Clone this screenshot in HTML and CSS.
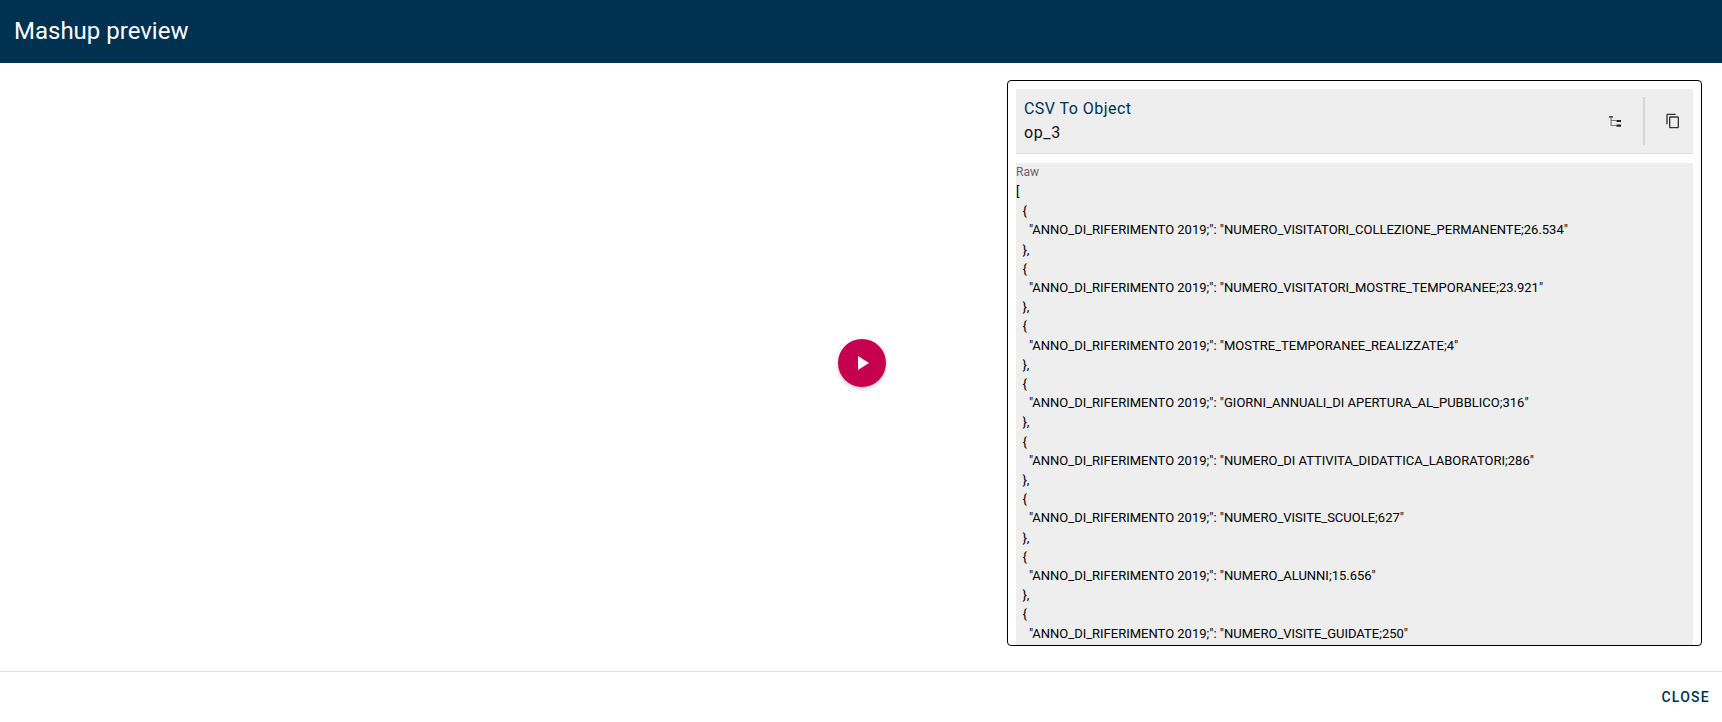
FILE: index.html
```html
<!DOCTYPE html>
<html lang="en">
<head>
<meta charset="utf-8">
<title>Mashup preview</title>
<link rel="stylesheet" href="styles.css">
</head>
<body>
<div class="dialog">
  <header class="title-bar">Mashup preview</header>
  <main class="content">
    <div class="run-area">
      <button class="play" type="button" aria-label="Run">
        <svg viewBox="0 0 24 24" width="24" height="24"><path d="M8 5v14l11-7z" fill="#fff"/></svg>
      </button>
    </div>
    <section class="panel">
      <div class="panel-head">
        <div class="panel-titles">
          <div class="op-type">CSV To Object</div>
          <div class="op-name">op_3</div>
        </div>
        <div class="panel-actions">
          <button class="icon-btn tree-btn" type="button" aria-label="Tree view">
            <svg viewBox="0 0 12 12" width="12" height="12"><path d="M0 1h4v1.700H0zM1.600 2.700h.9v8h-.9zM2.500 5.300h5v.8h-5zM2.500 9.900h5v.8h-5z" fill="#555"/><path d="M7.500 4.900H12v2.200H7.500zM7.500 9.500H12v2.200H7.500z" fill="#222"/></svg>
          </button>
          <span class="divider"></span>
          <button class="icon-btn copy-btn" type="button" aria-label="Copy">
            <svg viewBox="0 0 24 24" width="16" height="16"><path d="M16 1H4c-1.100 0-2 .9-2 2v14h2V3h12V1zm3 4H8c-1.100 0-2 .9-2 2v14c0 1.100.9 2 2 2h11c1.100 0 2-.9 2-2V7c0-1.100-.9-2-2-2zm0 16H8V7h11v14z" fill="#333"/></svg>
          </button>
        </div>
      </div>
      <div class="raw">
        <div class="raw-label">Raw</div>
<pre class="raw-json">[
  {
    "ANNO_DI_RIFERIMENTO 2019;": "NUMERO_VISITATORI_COLLEZIONE_PERMANENTE;26.534"
  },
  {
    "ANNO_DI_RIFERIMENTO 2019;": "NUMERO_VISITATORI_MOSTRE_TEMPORANEE;23.921"
  },
  {
    "ANNO_DI_RIFERIMENTO 2019;": "MOSTRE_TEMPORANEE_REALIZZATE;4"
  },
  {
    "ANNO_DI_RIFERIMENTO 2019;": "GIORNI_ANNUALI_DI APERTURA_AL_PUBBLICO;316"
  },
  {
    "ANNO_DI_RIFERIMENTO 2019;": "NUMERO_DI ATTIVITA_DIDATTICA_LABORATORI;286"
  },
  {
    "ANNO_DI_RIFERIMENTO 2019;": "NUMERO_VISITE_SCUOLE;627"
  },
  {
    "ANNO_DI_RIFERIMENTO 2019;": "NUMERO_ALUNNI;15.656"
  },
  {
    "ANNO_DI_RIFERIMENTO 2019;": "NUMERO_VISITE_GUIDATE;250"</pre>
      </div>
    </section>
  </main>
  <footer class="actions">
    <button class="close" type="button">Close</button>
  </footer>
</div>
</body>
</html>
```

FILE: styles.css
```css
* { box-sizing: border-box; }
html, body { margin: 0; height: 100%; background: #fff; overflow: hidden; }
body { font-family: Roboto, "Liberation Sans", sans-serif; }
.dialog { display: flex; flex-direction: column; height: 722px; }
.title-bar {
  height: 63px; flex: none; background: #003151; color: #fff;
  font-size: 24px; font-weight: 400; line-height: 63px; padding-left: 14px;
}
.content { flex: none; height: 608px; display: flex; padding: 17px 20px 25px 0; }
.run-area { flex: 1; display: flex; align-items: center; justify-content: flex-end; padding-right: 121px; }
.play {
  width: 48px; height: 48px; border: 0; border-radius: 50%; background: #c6004f; padding: 0;
  display: flex; align-items: center; justify-content: center;
  box-shadow: 0 2px 4px -1px rgba(0,0,0,.2), 0 1px 5px 0 rgba(0,0,0,.12);
}
.panel {
  width: 695px; flex: none; border: 1px solid #000; border-radius: 4px;
  padding: 8px 8px 0; display: flex; flex-direction: column; gap: 9px; overflow: hidden;
}
.panel-head {
  height: 65px; flex: none; background: #eee; border-bottom: 1px solid #e0e0e0;
  display: flex; align-items: center; justify-content: space-between; padding: 0 8px;
}
.op-type { font-size: 16px; line-height: 24px; color: #003151; letter-spacing: .45px; }
.op-name { font-size: 16px; line-height: 24px; color: #111; font-weight: 400; letter-spacing: .6px; }
.panel-actions { display: flex; align-items: center; height: 48px; }
.icon-btn { border: 0; background: none; padding: 0; display: flex; align-items: center; justify-content: center; }
.tree-btn { width: 12px; margin-right: 22px; }
.divider { width: 2px; height: 48px; background: #d6d6d6; }
.copy-btn { width: 16px; margin-left: 20px; margin-right: 4px; }
.raw { flex: 1; min-height: 0; background: #eee; overflow: hidden; }
.raw-label { font-size: 12px; line-height: 18px; color: #666; margin-bottom: 1px; }
.raw-json {
  margin: 0; font-family: Roboto, "Liberation Sans", sans-serif;
  font-size: 13px; line-height: 19.2px; color: #000; white-space: pre;
}
.actions { flex: 1; border-top: 1px solid #e0e0e0; display: flex; align-items: center; justify-content: flex-end; padding-right: 12px; }
.close {
  border: 0; background: none; padding: 0; font-family: inherit; font-size: 14px; font-weight: 500;
  letter-spacing: 1.25px; text-transform: uppercase; color: #003151;
}
```
